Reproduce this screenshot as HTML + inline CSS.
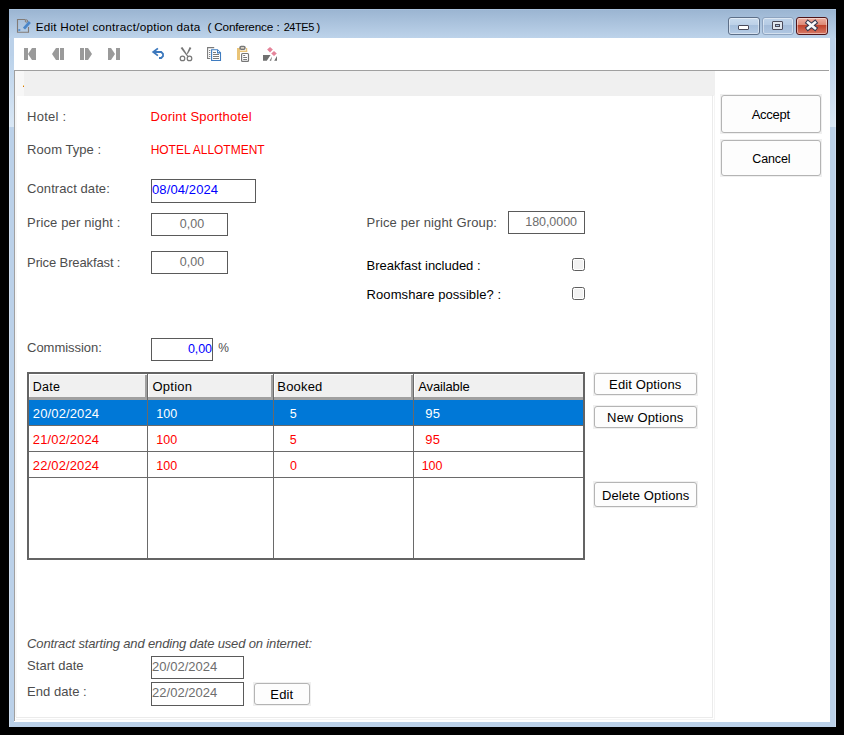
<!DOCTYPE html>
<html><head><meta charset="utf-8"><title>Edit Hotel contract/option data</title>
<style>
html,body{margin:0;padding:0;}
body{width:844px;height:735px;overflow:hidden;background:#000;position:relative;font-family:"Liberation Sans", sans-serif;}
div{box-sizing:content-box;}
</style></head><body>
<div style="position:absolute;left:9px;top:9px;width:827px;height:718px;background:#bbd1e9;"></div>
<div style="position:absolute;left:9px;top:9px;width:827px;height:29px;background:linear-gradient(#9ab4d1,#bdd3ea);"></div>
<div style="position:absolute;left:9px;top:9px;width:827px;height:1px;background:#a9c3de;"></div>
<div style="position:absolute;left:9px;top:56px;width:5px;height:71px;background:linear-gradient(#bbd2ea,#d9e7f5);"></div>
<div style="position:absolute;left:830px;top:56px;width:6px;height:71px;background:linear-gradient(#bbd2ea,#d9e7f5);"></div>
<div style="position:absolute;left:9px;top:38px;width:1px;height:689px;background:rgba(255,255,255,.25);"></div>
<div style="position:absolute;left:835px;top:38px;width:1px;height:689px;background:rgba(255,255,255,.25);"></div>
<div style="position:absolute;left:14px;top:38px;width:816px;height:684px;background:#fff;"></div>
<svg style="position:absolute;left:14px;top:16px" width="20" height="20" viewBox="0 0 20 20">
<path d="M14.5 11 V16.3 H3.5 V3.5 H11.5" fill="none" stroke="#827b76" stroke-width="1.1"/>
<circle cx="12.4" cy="5" r="1.2" fill="none" stroke="#827b76" stroke-width="1"/>
<path d="M10 12.6 L15.8 6" stroke="#4a86c8" stroke-width="2.8"/>
<path d="M4.3 14 H6.3" stroke="#4a86c8" stroke-width="1.6"/>
</svg>
<div style="position:absolute;left:35.63px;top:20.62px;font-size:11.75px;line-height:11.75px;color:#000;white-space:pre;letter-spacing:0.238px;">Edit Hotel contract/option data</div>
<div style="position:absolute;left:207.53px;top:20.62px;font-size:11.75px;line-height:11.75px;color:#000;white-space:pre;letter-spacing:-0.203px;">( Conference</div>
<div style="position:absolute;left:276.54px;top:20.62px;font-size:11.75px;line-height:11.75px;color:#000;white-space:pre;">:</div>
<div style="position:absolute;left:283.66px;top:21.62px;font-size:11px;line-height:11px;color:#000;white-space:pre;letter-spacing:-0.432px;">24TE5 )</div>
<div style="position:absolute;left:728px;top:17px;width:30px;height:16px;border:1px solid #5d6f88;border-radius:3px;background:linear-gradient(#c9dbee 0%,#bdd1e8 42%,#a6bfdc 44%,#b6cce5 100%);box-shadow:inset 0 0 0 1px rgba(255,255,255,.45)"></div>
<div style="position:absolute;left:738px;top:25px;width:9px;height:3px;background:#fff;border:1px solid #4a4a5a;border-radius:1px"></div>
<div style="position:absolute;left:762px;top:17px;width:30px;height:16px;border:1px solid #8ea4c0;border-radius:3px;background:linear-gradient(#c0d4ea 0%,#b5cbe4 42%,#a4bcd9 44%,#b0c7e2 100%);box-shadow:inset 0 0 0 1px rgba(255,255,255,.45)"></div>
<div style="position:absolute;left:772px;top:21px;width:9px;height:7px;border:1px solid #4a4a5a;background:#dfe6ee;border-radius:1px"></div><div style="position:absolute;left:775px;top:24px;width:3px;height:1px;background:#a9c6e4;border:1px solid #4a4a5a"></div>
<div style="position:absolute;left:796px;top:17px;width:30px;height:16px;border:1px solid #4f1418;border-radius:3px;background:linear-gradient(#eeb0a3 0%,#dd8a77 42%,#c0412a 44%,#d77966 100%);box-shadow:inset 0 0 0 1px rgba(255,255,255,.45)"></div>
<svg style="position:absolute;left:804px;top:19px" width="15" height="13" viewBox="0 0 15 13"><path d="M4 3.6 L11 9.2 M11 3.6 L4 9.2" stroke="#353a50" stroke-width="4.6" stroke-linecap="square"/><path d="M4 3.6 L11 9.2 M11 3.6 L4 9.2" stroke="#fafafa" stroke-width="2.6" stroke-linecap="square"/></svg>
<svg style="position:absolute;left:14px;top:38px" width="280" height="32" viewBox="14 38 280 32">
<rect x="24" y="48" width="4" height="12" fill="#9a9a9a"/><path d="M28 54 L32 48 H36 V60 H32 Z" fill="#9a9a9a"/>
<path d="M52 54 L56 48 H59 V60 H56 Z" fill="#9a9a9a"/><rect x="60" y="48" width="4" height="12" fill="#9a9a9a"/>
<rect x="80" y="48" width="4" height="12" fill="#9a9a9a"/><path d="M85 48 H88 L92 54 L88 60 H85 Z" fill="#9a9a9a"/>
<path d="M108 48 H111 L115 54 L111 60 H108 Z" fill="#9a9a9a"/><rect x="116" y="48" width="4" height="12" fill="#9a9a9a"/>
<path d="M157.9 48.4 L153.2 52 L157.9 55.6" fill="none" stroke="#3c78bd" stroke-width="1.8"/>
<path d="M153 52 H161.2 L163 53.8 V56.2 L161.2 58 H159" fill="none" stroke="#3c78bd" stroke-width="1.8"/>
<path d="M180.6 48 L182.4 47 L188.4 56.2 L187.4 56.8 Z" fill="#777"/>
<path d="M189.6 47 L191.4 48 L187.8 54 L186.8 53.4 Z" fill="#777"/>
<circle cx="182.5" cy="58.4" r="2.3" fill="none" stroke="#777" stroke-width="1.2"/>
<circle cx="189.5" cy="58.4" r="2.3" fill="none" stroke="#777" stroke-width="1.2"/>
<path d="M210.3 58.5 H207.6 V47.6 H214.2" fill="none" stroke="#7a7a7a" stroke-width="1.1"/>
<path d="M209.1 50.5 H210.3 M209.1 52.5 H210.3 M209.1 54.5 H210.3 M209.1 56.5 H210.3" stroke="#7a7a7a" stroke-width="1"/>
<path d="M211.6 49.7 H217.4 L220.5 52.8 V60.5 H211.6 Z" fill="#fff" stroke="#3f7cc0" stroke-width="1.1"/>
<path d="M217 49.5 L221 53.5 H217 Z" fill="#3f7cc0"/>
<circle cx="218.6" cy="51.6" r="0.7" fill="#fff"/>
<path d="M213 52.5 H216 M213 54.5 H219 M213 56.5 H219 M213 58.5 H219" stroke="#7a7a7a" stroke-width="1"/>
<path d="M238.5 60 V48" stroke="#eac477" stroke-width="3"/>
<path d="M237 51.3 H247.2" stroke="#eac477" stroke-width="1.5"/>
<path d="M246.6 48 V52" stroke="#eac477" stroke-width="1.2"/>
<rect x="240" y="46.6" width="5" height="2.6" rx="1.2" fill="#fff3df" stroke="#777" stroke-width="1.5"/>
<rect x="241.6" y="53.5" width="6.9" height="7.8" rx="0.9" fill="#fff" stroke="#777" stroke-width="1.2"/>
<path d="M243.2 55.5 H245.2 M243.2 57.5 H247 M243.2 59.5 H247" stroke="#7a7a7a" stroke-width="1.1"/>
<path d="M270 46.9 L272.9 49.6 L270 52.4 L267.1 49.6 Z M274 50.9 L276.8 53.5 L274 56.1 L271.2 53.5 Z" fill="#e5849a"/>
<path d="M263 55 H270.6 L266.8 60.8 H263 Z M272 56.6 L271.2 60.8 H269.6 Z M277 56 V60.8 H274.2 Z" fill="#707070"/>
</svg>
<div style="position:absolute;left:14px;top:70px;width:815px;height:1px;background:#a0a0a0;"></div>
<div style="position:absolute;left:14px;top:70px;width:1px;height:651px;background:#a0a0a0;"></div>
<div style="position:absolute;left:15px;top:71px;width:9px;height:25px;background:#f7f7f7;"></div>
<div style="position:absolute;left:24px;top:71px;width:691px;height:25px;background:#f0f0f0;"></div>
<div style="position:absolute;left:23px;top:85px;width:1px;height:1px;background:#f5d070;"></div>
<div style="position:absolute;left:23px;top:86px;width:1px;height:1px;background:#d07010;"></div>
<div style="position:absolute;left:712px;top:95px;width:1px;height:622px;background:#ebebeb;"></div>
<div style="position:absolute;left:714px;top:95px;width:1px;height:624px;background:#f4f4f4;"></div>
<div style="position:absolute;left:15px;top:96px;width:2px;height:621px;background:#f7f7f7;"></div>
<div style="position:absolute;left:16px;top:717px;width:697px;height:1px;background:#ebebeb;"></div>
<div style="position:absolute;left:16px;top:719px;width:699px;height:1px;background:#f4f4f4;"></div>
<div style="position:absolute;left:27.10px;top:110.05px;font-size:13px;line-height:13px;color:#4d4d4d;white-space:pre;letter-spacing:0.244px;">Hotel :</div>
<div style="position:absolute;left:150.62px;top:110.44px;font-size:13px;line-height:13px;color:#ff0000;white-space:pre;letter-spacing:0.221px;">Dorint Sporthotel</div>
<div style="position:absolute;left:27.10px;top:143.42px;font-size:13px;line-height:13px;color:#4d4d4d;white-space:pre;letter-spacing:0.062px;">Room Type :</div>
<div style="position:absolute;left:150.65px;top:143.98px;font-size:12px;line-height:12px;color:#ff0000;white-space:pre;letter-spacing:-0.019px;">HOTEL ALLOTMENT</div>
<div style="position:absolute;left:27.10px;top:181.79px;font-size:13px;line-height:13px;color:#4d4d4d;white-space:pre;letter-spacing:0.076px;">Contract date:</div>
<div style="position:absolute;left:151px;top:179px;width:103px;height:22px;border:1px solid #5a5a5a;background:#fff;"></div>
<div style="position:absolute;left:152.03px;top:182.95px;font-size:13px;line-height:13px;color:#0000ff;white-space:pre;letter-spacing:0.108px;">08/04/2024</div>
<div style="position:absolute;left:27.10px;top:216.46px;font-size:13px;line-height:13px;color:#4d4d4d;white-space:pre;letter-spacing:0.146px;">Price per night :</div>
<div style="position:absolute;left:151px;top:213px;width:75px;height:21px;border:1px solid #5a5a5a;background:#fff;"></div>
<div style="position:absolute;left:179.72px;top:217.64px;font-size:12.5px;line-height:12.5px;color:#6d6d6d;white-space:pre;letter-spacing:0.039px;">0,00</div>
<div style="position:absolute;left:27.10px;top:255.86px;font-size:13px;line-height:13px;color:#4d4d4d;white-space:pre;letter-spacing:-0.124px;">Price Breakfast :</div>
<div style="position:absolute;left:151px;top:251px;width:75px;height:21px;border:1px solid #5a5a5a;background:#fff;"></div>
<div style="position:absolute;left:179.72px;top:255.80px;font-size:12.5px;line-height:12.5px;color:#6d6d6d;white-space:pre;letter-spacing:0.039px;">0,00</div>
<div style="position:absolute;left:366.60px;top:215.88px;font-size:13px;line-height:13px;color:#4d4d4d;white-space:pre;letter-spacing:0.148px;">Price per night Group:</div>
<div style="position:absolute;left:508px;top:211px;width:75px;height:21px;border:1px solid #5a5a5a;background:#fff;"></div>
<div style="position:absolute;left:525.29px;top:215.80px;font-size:12.5px;line-height:12.5px;color:#6d6d6d;white-space:pre;letter-spacing:-0.059px;">180,0000</div>
<div style="position:absolute;left:366.60px;top:258.74px;font-size:13px;line-height:13px;color:#000;white-space:pre;letter-spacing:-0.012px;">Breakfast included :</div>
<div style="position:absolute;left:572px;top:258px;width:11px;height:11px;border:1px solid #5e5e5e;border-radius:2.5px;background:#f2f2f2;box-shadow:inset 0 0 0 1px #fff;"></div>
<div style="position:absolute;left:366.60px;top:288.04px;font-size:13px;line-height:13px;color:#000;white-space:pre;letter-spacing:0.075px;">Roomshare possible? :</div>
<div style="position:absolute;left:572px;top:287px;width:11px;height:11px;border:1px solid #5e5e5e;border-radius:2.5px;background:#f2f2f2;box-shadow:inset 0 0 0 1px #fff;"></div>
<div style="position:absolute;left:27.10px;top:340.71px;font-size:13px;line-height:13px;color:#4d4d4d;white-space:pre;letter-spacing:-0.047px;">Commission:</div>
<div style="position:absolute;left:151px;top:338px;width:60px;height:21px;border:1px solid #5a5a5a;background:#fff;"></div>
<div style="position:absolute;left:187.95px;top:342.55px;font-size:12.5px;line-height:12.5px;color:#0000ff;white-space:pre;letter-spacing:-0.075px;">0,00</div>
<div style="position:absolute;left:218.36px;top:341.65px;font-size:12px;line-height:12px;color:#4d4d4d;white-space:pre;">%</div>
<div style="position:absolute;left:27px;top:372px;width:558px;height:188px;background:#fff;"></div>
<div style="position:absolute;left:29px;top:374px;width:554px;height:26px;background:#f0f0f0;"></div>
<div style="position:absolute;left:29px;top:374px;width:118px;height:1px;background:#fff;"></div>
<div style="position:absolute;left:29px;top:374px;width:1px;height:23px;background:#fff;"></div>
<div style="position:absolute;left:145px;top:375px;width:2px;height:23px;background:#a0a0a0;"></div>
<div style="position:absolute;left:148px;top:374px;width:125px;height:1px;background:#fff;"></div>
<div style="position:absolute;left:148px;top:374px;width:1px;height:23px;background:#fff;"></div>
<div style="position:absolute;left:271px;top:375px;width:2px;height:23px;background:#a0a0a0;"></div>
<div style="position:absolute;left:274px;top:374px;width:139px;height:1px;background:#fff;"></div>
<div style="position:absolute;left:274px;top:374px;width:1px;height:23px;background:#fff;"></div>
<div style="position:absolute;left:411px;top:375px;width:2px;height:23px;background:#a0a0a0;"></div>
<div style="position:absolute;left:414px;top:374px;width:169px;height:1px;background:#fff;"></div>
<div style="position:absolute;left:414px;top:374px;width:1px;height:23px;background:#fff;"></div>
<div style="position:absolute;left:29px;top:397px;width:554px;height:3px;background:#a0a0a0;"></div>
<div style="position:absolute;left:29px;top:400px;width:554px;height:25px;background:#0078d7;"></div>
<div style="position:absolute;left:29px;top:425px;width:554px;height:1px;background:#6a6a6a;"></div>
<div style="position:absolute;left:29px;top:451px;width:554px;height:1px;background:#6a6a6a;"></div>
<div style="position:absolute;left:29px;top:477px;width:554px;height:1px;background:#6a6a6a;"></div>
<div style="position:absolute;left:147px;top:374px;width:1px;height:184px;background:#6a6a6a;"></div>
<div style="position:absolute;left:273px;top:374px;width:1px;height:184px;background:#6a6a6a;"></div>
<div style="position:absolute;left:413px;top:374px;width:1px;height:184px;background:#6a6a6a;"></div>
<div style="position:absolute;left:27px;top:372px;width:554px;height:184px;border:2px solid #646464;background:transparent;"></div>
<div style="position:absolute;left:32.83px;top:380.82px;font-size:12.5px;line-height:12.5px;color:#000;white-space:pre;letter-spacing:0.249px;">Date</div>
<div style="position:absolute;left:152.42px;top:379.54px;font-size:13px;line-height:13px;color:#000;white-space:pre;letter-spacing:0.279px;">Option</div>
<div style="position:absolute;left:277.37px;top:379.72px;font-size:13px;line-height:13px;color:#000;white-space:pre;letter-spacing:0.165px;">Booked</div>
<div style="position:absolute;left:418.24px;top:379.71px;font-size:13px;line-height:13px;color:#000;white-space:pre;letter-spacing:-0.142px;">Available</div>
<div style="position:absolute;left:32.87px;top:407.16px;font-size:13px;line-height:13px;color:#fff;white-space:pre;letter-spacing:0.126px;">20/02/2024</div>
<div style="position:absolute;left:156.14px;top:408.26px;font-size:12.5px;line-height:12.5px;color:#fff;white-space:pre;letter-spacing:0.150px;">100</div>
<div style="position:absolute;left:289.67px;top:408.34px;font-size:12.5px;line-height:12.5px;color:#fff;white-space:pre;">5</div>
<div style="position:absolute;left:425.33px;top:407.34px;font-size:13px;line-height:13px;color:#fff;white-space:pre;letter-spacing:0.243px;">95</div>
<div style="position:absolute;left:32.87px;top:433.16px;font-size:13px;line-height:13px;color:#ff0000;white-space:pre;letter-spacing:0.126px;">21/02/2024</div>
<div style="position:absolute;left:156.14px;top:434.26px;font-size:12.5px;line-height:12.5px;color:#ff0000;white-space:pre;letter-spacing:0.150px;">100</div>
<div style="position:absolute;left:289.67px;top:434.34px;font-size:12.5px;line-height:12.5px;color:#ff0000;white-space:pre;">5</div>
<div style="position:absolute;left:425.33px;top:433.34px;font-size:13px;line-height:13px;color:#ff0000;white-space:pre;letter-spacing:0.243px;">95</div>
<div style="position:absolute;left:32.87px;top:459.16px;font-size:13px;line-height:13px;color:#ff0000;white-space:pre;letter-spacing:0.126px;">22/02/2024</div>
<div style="position:absolute;left:156.14px;top:460.26px;font-size:12.5px;line-height:12.5px;color:#ff0000;white-space:pre;letter-spacing:0.150px;">100</div>
<div style="position:absolute;left:289.95px;top:460.25px;font-size:12.5px;line-height:12.5px;color:#ff0000;white-space:pre;">0</div>
<div style="position:absolute;left:421.71px;top:460.16px;font-size:12.5px;line-height:12.5px;color:#ff0000;white-space:pre;letter-spacing:-0.046px;">100</div>
<div style="position:absolute;left:593px;top:372px;width:105px;height:24px;background:#f0f0f0;"></div>
<div style="position:absolute;left:594px;top:373px;width:101px;height:20px;border:1px solid #b4b4b4;border-radius:3px;background:#fdfdfd;"></div>
<div style="position:absolute;left:609.10px;top:377.58px;font-size:13px;line-height:13px;color:#000;white-space:pre;letter-spacing:0.122px;">Edit Options</div>
<div style="position:absolute;left:593px;top:405px;width:105px;height:24px;background:#f0f0f0;"></div>
<div style="position:absolute;left:594px;top:406px;width:101px;height:20px;border:1px solid #b4b4b4;border-radius:3px;background:#fdfdfd;"></div>
<div style="position:absolute;left:607.09px;top:411.29px;font-size:13px;line-height:13px;color:#000;white-space:pre;letter-spacing:0.179px;">New Options</div>
<div style="position:absolute;left:593px;top:481px;width:105px;height:27px;background:#f0f0f0;"></div>
<div style="position:absolute;left:594px;top:482px;width:101px;height:23px;border:1px solid #b4b4b4;border-radius:3px;background:#fdfdfd;"></div>
<div style="position:absolute;left:601.88px;top:488.58px;font-size:13px;line-height:13px;color:#000;white-space:pre;letter-spacing:0.112px;">Delete Options</div>
<div style="position:absolute;left:720px;top:94px;width:102px;height:40px;background:#f0f0f0;"></div>
<div style="position:absolute;left:721px;top:95px;width:98px;height:36px;border:1px solid #b4b4b4;border-radius:3px;background:#fdfdfd;"></div>
<div style="position:absolute;left:751.65px;top:107.91px;font-size:13px;line-height:13px;color:#000;white-space:pre;letter-spacing:-0.244px;">Accept</div>
<div style="position:absolute;left:720px;top:139px;width:102px;height:38px;background:#f0f0f0;"></div>
<div style="position:absolute;left:721px;top:140px;width:98px;height:34px;border:1px solid #b4b4b4;border-radius:3px;background:#fdfdfd;"></div>
<div style="position:absolute;left:752.33px;top:152.53px;font-size:12.5px;line-height:12.5px;color:#000;white-space:pre;letter-spacing:-0.132px;">Cancel</div>
<div style="position:absolute;left:27.08px;top:636.76px;font-size:13px;line-height:13px;color:#4d4d4d;white-space:pre;letter-spacing:-0.154px;font-style:italic;">Contract starting and ending date used on internet:</div>
<div style="position:absolute;left:27.10px;top:659.19px;font-size:13px;line-height:13px;color:#4d4d4d;white-space:pre;letter-spacing:0.009px;">Start date</div>
<div style="position:absolute;left:151px;top:656px;width:91px;height:21px;border:1px solid #5a5a5a;background:#fff;"></div>
<div style="position:absolute;left:152.07px;top:659.99px;font-size:13px;line-height:13px;color:#6d6d6d;white-space:pre;letter-spacing:0.017px;">20/02/2024</div>
<div style="position:absolute;left:27.10px;top:685.02px;font-size:13px;line-height:13px;color:#4d4d4d;white-space:pre;letter-spacing:0.037px;">End date :</div>
<div style="position:absolute;left:151px;top:682px;width:91px;height:22px;border:1px solid #5a5a5a;background:#fff;"></div>
<div style="position:absolute;left:152.07px;top:686.21px;font-size:13px;line-height:13px;color:#6d6d6d;white-space:pre;letter-spacing:0.017px;">22/02/2024</div>
<div style="position:absolute;left:253px;top:682px;width:58px;height:24px;background:#f0f0f0;"></div>
<div style="position:absolute;left:254px;top:683px;width:54px;height:20px;border:1px solid #b4b4b4;border-radius:3px;background:#fdfdfd;"></div>
<div style="position:absolute;left:270.37px;top:688.38px;font-size:13px;line-height:13px;color:#000;white-space:pre;letter-spacing:0.115px;">Edit</div>
</body></html>
